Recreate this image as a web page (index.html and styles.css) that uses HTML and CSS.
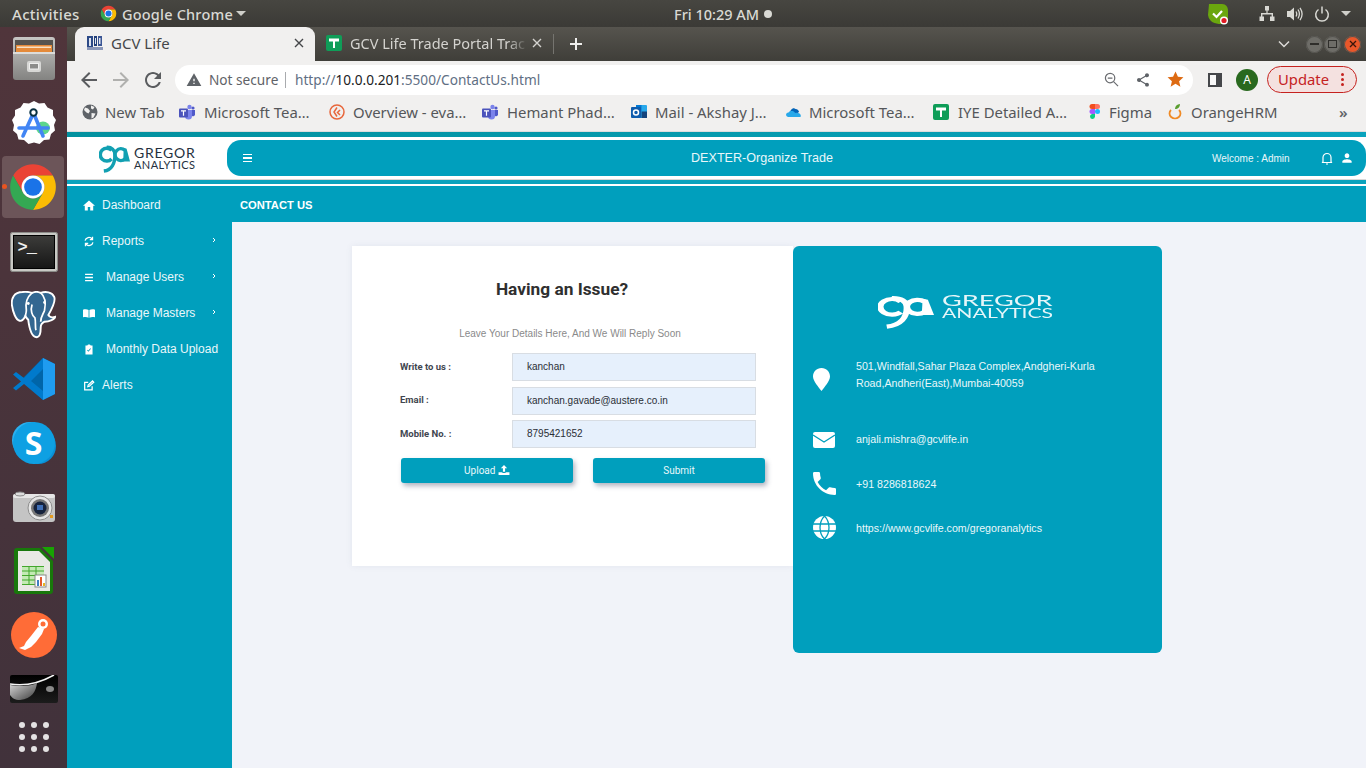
FILE: index.html
```html
<!DOCTYPE html>
<html lang="en">
<head>
<meta charset="utf-8">
<title>GCV Life</title>
<link rel="stylesheet" href="styles.css">
</head>
<body>
<svg class="defs" width="0" height="0" aria-hidden="true">
  <symbol id="chrome" viewBox="0 0 48 48">
    <path fill="#ea4335" d="M5 13A22 22 0 0 1 43 13H24A11 11 0 0 0 14.500 18.500L14.500 29.500Z"/>
    <path fill="#fbbc04" d="M24 13H43A22 22 0 0 1 24 46L33.500 29.500A11 11 0 0 0 24 13Z"/>
    <path fill="#34a853" d="M5 13L14.500 29.500A11 11 0 0 0 33.500 29.500L24 46A22 22 0 0 1 5 13Z"/>
    <circle cx="24" cy="24" r="11" fill="#fff"/>
    <circle cx="24" cy="24" r="8.500" fill="#1a73e8"/>
  </symbol>
  <symbol id="sheet" viewBox="0 0 16 16">
    <rect width="16" height="16" rx="2" fill="#0f9d58"/>
    <path fill="#fff" d="M3 3.500H13V6.500H9V13H7V6.500H3Z"/>
  </symbol>
  <symbol id="teams" viewBox="0 0 16 16">
    <circle cx="10.500" cy="3" r="2.200" fill="#7b83eb"/>
    <circle cx="14" cy="4" r="1.600" fill="#5059c9"/>
    <path fill="#7b83eb" d="M6 6H13V12A3.500 3.500 0 0 1 6 12Z"/>
    <path fill="#5059c9" d="M13 6H16V10.500A2 2 0 0 1 13 12Z"/>
    <rect x="0" y="4.500" width="9" height="9" rx="1" fill="#4b53bc"/>
    <path fill="#fff" d="M2 6.300H7V7.500H5.100V11.800H3.900V7.500H2Z"/>
  </symbol>
  <symbol id="mark" viewBox="0 0 32 30" preserveAspectRatio="none">
    <g fill="none" stroke="currentColor" stroke-width="3.600">
      <path d="M13 6.500A6.700 6.700 0 1 0 13 15.500"/>
      <path d="M8 3.500C13 3.200 16.500 6.500 16.500 11C16.500 20 13 27 5 28"/>
      <path d="M26.500 6.500A6 6 0 1 0 26.500 15.500"/>
    </g>
    <path fill="currentColor" d="M25.500 4L28.500 5L32 18H25Z"/>
  </symbol>
</svg>

<header class="topbar">
  <span class="top-activities">Activities</span>
  <svg class="top-chrome"><use href="#chrome"/></svg>
  <span class="top-app">Google Chrome</span>
  <span class="caret top-caret"></span>
  <span class="top-clock">Fri 10:29 AM</span>
  <span class="top-dot"></span>
  <div class="tray">
    <svg class="tray-shield" viewBox="0 0 22 22">
      <path fill="#6aa60e" d="M2 1H15C19 1 21 4 21 8V15C21 19 18 21 14 21C8 21 2 19 1 12Z"/>
      <path fill="none" stroke="#fff" stroke-width="2.200" d="M6 10.500L9.500 14L15 8"/>
      <circle cx="17" cy="17.500" r="4" fill="#fff"/>
      <circle cx="17" cy="17.500" r="2.600" fill="#e01b24"/>
    </svg>
    <svg class="tray-net" viewBox="0 0 16 16">
      <path fill="#d8d8d3" d="M6 0H10V4.500H8.600V7H14V10.500H15.500V15H11V10.500H12.600V8.400H3.400V10.500H5V15H.5V10.500H2V7H7.400V4.500H6Z"/>
    </svg>
    <svg class="tray-vol" viewBox="0 0 16 16">
      <path fill="#d8d8d3" d="M0 5H3L7 1.500V14.500L3 11H0Z"/>
      <path fill="none" stroke="#d8d8d3" stroke-width="1.300" d="M9 5.500Q10.500 8 9 10.500M11 3.500Q13.800 8 11 12.500M13 1.800Q17.200 8 13 14.200"/>
    </svg>
    <svg class="tray-power" viewBox="0 0 16 16">
      <path fill="none" stroke="#d8d8d3" stroke-width="1.500" d="M4.500 3.500A6.300 6.300 0 1 0 11.500 3.500M8 .5V7.500"/>
    </svg>
    <span class="caret"></span>
  </div>
</header>

<div class="desktop">
  <nav class="dock">
    <div class="dock-slot">
      <svg class="dock-icon" viewBox="0 0 44 44">
        <defs>
          <linearGradient id="cab" x1="0" y1="0" x2="0" y2="1">
            <stop offset="0" stop-color="#c6c6c4"/>
            <stop offset="1" stop-color="#838381"/>
          </linearGradient>
        </defs>
        <rect x="1" y="0" width="42" height="43" rx="3" fill="url(#cab)"/>
        <rect x="3" y="3" width="38" height="12" fill="#55534f"/>
        <rect x="4" y="8" width="36" height="7" fill="#e48a3a"/>
        <rect x="5" y="9.500" width="34" height="1.500" fill="#f6e0c4"/>
        <rect x="1" y="15" width="42" height="2" fill="#dcdcda"/>
        <rect x="15" y="24" width="14" height="11" rx="2" fill="#d7d7d5"/>
        <rect x="17.500" y="26.500" width="9" height="5.500" fill="#8c8c8a" stroke="#efefee"/>
      </svg>
    </div>
    <div class="dock-slot">
      <svg class="dock-icon" viewBox="0 0 44 44">
        <path fill="#fff" d="M22 0L27 2.500L32.500 2L35.500 6.500L41 9L41 14.500L44 19L42 24L43 29.500L39 33L37.500 38.500L32 39L27.500 43L22 41.500L16.500 43L12 39L6.500 38.500L5 33L1 29.500L2 24L0 19L3 14.500L3 9L8.500 6.500L11.500 2L17 2.500Z"/>
        <ellipse cx="31" cy="27" rx="7" ry="6.500" fill="#5cd68d"/>
        <path fill="none" stroke="#4285f4" stroke-width="3.600" stroke-linecap="round" d="M21 13L11 35M22 13L31 35M7 27H36"/>
        <circle cx="21.500" cy="11.500" r="3.200" fill="#fff" stroke="#073042" stroke-width="2"/>
      </svg>
    </div>
    <div class="dock-slot">
      <div class="dock-tile">
        <span class="dock-running"></span>
        <svg class="dock-chrome"><use href="#chrome"/></svg>
      </div>
    </div>
    <div class="dock-slot">
      <div class="term">
        <div class="term-screen">&gt;_</div>
      </div>
    </div>
    <div class="dock-slot">
      <svg class="dock-icon dock-pg" viewBox="0 0 48 50">
        <path fill="#336791" stroke="#fff" stroke-width="2" d="M12 1C3 1 0 8 1 15C2 22 5 30 9 31C12 32 14 28 15 26C16 28 17 29 18 30C19 38 21 47 26 48C30 49 31 44 31 38C31 35 33 33 35 32C40 32 46 29 46 27C43 28 40 27 39 25C43 18 47 10 45 6C43 1 36 0 31 2C28 .5 25 .5 22 2C19 1 15 .5 12 1Z"/>
        <path fill="none" stroke="#fff" stroke-width="1.800" d="M22 2C16 7 15 14 16 20C16 23 15 25 15 26M31 2C37 7 36 15 35 20C34 24 31 26 31 32M22 14C20 20 22 26 25 28C26 32 25 38 26 41"/>
        <circle cx="18" cy="13" r="1.500" fill="#fff"/>
        <circle cx="35" cy="12" r="1.500" fill="#fff"/>
      </svg>
    </div>
    <div class="dock-slot">
      <svg class="dock-icon" viewBox="0 0 44 44">
        <path fill="#0065a9" d="M31 1L43 7V37L31 43L9 23Z"/>
        <path fill="#007acc" d="M12 21L4 15L1 17.500L9 24.500L1 31L4 33.500L12 27L31 43V34L19 24L31 12V1Z"/>
        <path fill="#1f9cf0" d="M31 1L43 7V37L31 43Z"/>
      </svg>
    </div>
    <div class="dock-slot">
      <div class="skype"><span class="skype-s">S</span></div>
    </div>
    <div class="dock-slot">
      <svg class="dock-icon dock-cam" viewBox="0 0 44 32">
        <rect x="1" y="3" width="42" height="28" rx="3" fill="#c4c4c4"/>
        <rect x="1" y="3" width="42" height="4" rx="2" fill="#e6e6e6"/>
        <ellipse cx="8" cy="3" rx="5" ry="2" fill="#dcdcdc" stroke="#8a8a8a"/>
        <circle cx="28" cy="17" r="12" fill="#e5e5e5" stroke="#8e8e8e"/>
        <circle cx="28" cy="17" r="9" fill="#777"/>
        <circle cx="28" cy="17" r="6.500" fill="#16233d"/>
        <rect x="25" y="14" width="6" height="5" fill="#3f6fb6"/>
        <rect x="38" y="24" width="3" height="3" fill="#e49a21"/>
      </svg>
    </div>
    <div class="dock-slot">
      <svg class="dock-icon dock-calc" viewBox="0 0 40 48">
        <path fill="#18a303" d="M28 0H40V12Z"/>
        <path fill="#18780b" d="M3 1H26L39 14V44A3 3 0 0 1 36 47H3A3 3 0 0 1 0 44V4A3 3 0 0 1 3 1Z"/>
        <path fill="#e8e8e4" d="M4 4H25L36 15V44H4Z"/>
        <rect x="8" y="19" width="22" height="19" fill="#c3eab4"/>
        <path stroke="#43a72c" fill="none" d="M8 19.500H30M8 24H30M8 28.500H30M8 33H30M8 37.500H30M15 19V38M22 19V38"/>
        <rect x="21" y="28" width="11" height="12" fill="#fff" stroke="#888"/>
        <rect x="23" y="33" width="2" height="6" fill="#3e7fc1"/>
        <rect x="26" y="30" width="2" height="9" fill="#e2582a"/>
        <rect x="29" y="36" width="2" height="3" fill="#e8b321"/>
      </svg>
    </div>
    <div class="dock-slot">
      <svg class="dock-icon dock-postman" viewBox="0 0 46 46">
        <circle cx="23" cy="23" r="23" fill="#ff6c37"/>
        <path fill="#fff" d="M8 36L13 34L15 30L20 24L27 15L33 17L31 22L25 30L20 35L14 38Z"/>
        <circle cx="32" cy="12" r="5" fill="#fff"/>
        <circle cx="32" cy="12" r="2.500" fill="#ff6c37"/>
      </svg>
    </div>
    <div class="dock-slot dock-slot-pan">
      <svg class="dock-icon dock-pan" viewBox="0 0 48 28">
        <defs>
          <linearGradient id="pan" x1="0" y1="0" x2="0" y2="1">
            <stop offset="0" stop-color="#000"/>
            <stop offset="1" stop-color="#1c1c1c"/>
          </linearGradient>
          <linearGradient id="panbowl" x1="0" y1="0" x2="1" y2="1">
            <stop offset="0" stop-color="#d8d8d8"/>
            <stop offset="1" stop-color="#3a3a3a"/>
          </linearGradient>
        </defs>
        <rect width="48" height="28" rx="2" fill="url(#pan)"/>
        <path fill="url(#panbowl)" d="M0 10C10 12 22 11 27 8C26 16 22 24 10 25C5 25 2 23 0 20Z"/>
        <path fill="none" stroke="#f4f4f4" stroke-width="1.600" d="M0 9C12 11 28 9 44 0"/>
        <ellipse cx="40" cy="14" rx="4" ry="3" fill="#8a8a8a"/>
      </svg>
    </div>
    <div class="dock-grid">
      <span class="dock-dotrow"><i></i><i></i><i></i></span>
      <span class="dock-dotrow"><i></i><i></i><i></i></span>
      <span class="dock-dotrow"><i></i><i></i><i></i></span>
    </div>
  </nav>

  <div class="window">
    <div class="tabstrip">
      <div class="tab tab-active">
        <svg class="fav" viewBox="0 0 16 16">
          <rect x="0" y="1" width="6" height="13" fill="#2c4a87"/>
          <rect x="7" y="1" width="3" height="10" fill="#223f78"/>
          <rect x="11" y="1" width="4" height="10" fill="#3a5594"/>
          <rect x="0" y="12" width="16" height="3" fill="#8a97b8"/>
          <rect x="2" y="3" width="2" height="8" fill="#dfe5f0"/>
          <rect x="8" y="3" width="1" height="6" fill="#dfe5f0"/>
          <rect x="12" y="3" width="1.500" height="6" fill="#dfe5f0"/>
        </svg>
        <span class="tab-title">GCV Life</span>
        <svg class="tab-x" viewBox="0 0 10 10"><path d="M1 1L9 9M9 1L1 9"/></svg>
      </div>
      <div class="tab tab-other">
        <svg class="fav"><use href="#sheet"/></svg>
        <span class="tab-title tab-fade">GCV Life Trade Portal Trac</span>
        <svg class="tab-x" viewBox="0 0 10 10"><path d="M1 1L9 9M9 1L1 9"/></svg>
      </div>
      <span class="tab-sep"></span>
      <svg class="tab-plus" viewBox="0 0 14 14"><path d="M7 1V13M1 7H13"/></svg>
      <svg class="tab-search" viewBox="0 0 12 8"><path d="M1 1.500L6 6.500L11 1.500"/></svg>
      <div class="winbtns">
        <span class="winbtn"><i class="win-min"></i></span>
        <span class="winbtn"><i class="win-max"></i></span>
        <span class="winbtn win-close">
          <svg viewBox="0 0 8 8"><path d="M1 1L7 7M7 1L1 7"/></svg>
        </span>
      </div>
    </div>

    <div class="toolbar">
      <svg class="nav-ico" viewBox="0 0 24 24"><path d="M20 11H7.830l5.590-5.590L12 4l-8 8 8 8 1.410-1.410L7.830 13H20v-2z"/></svg>
      <svg class="nav-ico nav-dim" viewBox="0 0 24 24"><path d="M12 4l-1.410 1.410L16.170 11H4v2h12.170l-5.580 5.590L12 20l8-8z"/></svg>
      <svg class="nav-ico" viewBox="0 0 24 24"><path d="M17.650 6.350C16.200 4.900 14.210 4 12 4c-4.420 0-7.990 3.580-7.990 8s3.570 8 7.990 8c3.730 0 6.840-2.550 7.730-6h-2.080c-.82 2.330-3.040 4-5.650 4-3.310 0-6-2.690-6-6s2.690-6 6-6c1.660 0 3.140.69 4.220 1.780L13 11h7V4l-2.350 2.350z"/></svg>
      <div class="omnibox">
        <svg class="omni-warn" viewBox="0 0 24 24"><path d="M1 21h22L12 2 1 21zm12-3h-2v-2h2v2zm0-4h-2v-4h2v4z"/></svg>
        <span class="omni-ns">Not secure</span>
        <span class="omni-sep"></span>
        <span class="omni-url">http://<b>10.0.0.201</b>:5500/ContactUs.html</span>
        <svg class="omni-ico" viewBox="0 0 16 16"><circle cx="6.500" cy="6.500" r="5"/><path d="M10.200 10.200L15 15M4 6.500H9"/></svg>
        <svg class="omni-share" viewBox="0 0 24 24"><path d="M18 16.080c-.76 0-1.440.3-1.960.77L8.910 12.700c.05-.23.09-.46.09-.7s-.04-.47-.09-.7l7.050-4.110c.54.5 1.250.81 2.040.81 1.660 0 3-1.340 3-3s-1.340-3-3-3-3 1.340-3 3c0 .24.04.47.09.7L8.040 9.810C7.500 9.310 6.790 9 6 9c-1.660 0-3 1.340-3 3s1.340 3 3 3c.79 0 1.500-.31 2.040-.81l7.120 4.160c-.05.21-.08.43-.08.65 0 1.610 1.310 2.920 2.920 2.920 1.610 0 2.920-1.310 2.920-2.920s-1.310-2.920-2.920-2.920z"/></svg>
        <svg class="omni-star" viewBox="0 0 24 24"><path d="M12 17.270L18.180 21l-1.640-6.730L22 9.240l-6.910-.59L12 2 8.910 8.650 2 9.240l5.460 5.030L5.820 21z"/></svg>
      </div>
      <span class="panel-ico"></span>
      <span class="avatar">A</span>
      <div class="update"><span>Update</span><span class="update-dots"><i></i><i></i><i></i></span></div>
    </div>

    <div class="bookmarks">
      <div class="bm">
        <svg class="bm-ico" viewBox="0 0 16 16"><circle cx="8" cy="8" r="7.500" fill="#5f6368"/><path fill="#f1f0ef" d="M3 3.500L6 4.500L8 7L6.500 9.500L4.500 8.500L2 6ZM9 1.500L12.500 3L11 5.500L9 4.500ZM9.500 9L13.500 9.500L11.500 13.500L9.500 14.500Z"/></svg>
        <span class="bm-text">New Tab</span>
      </div>
      <div class="bm">
        <svg class="bm-ico"><use href="#teams"/></svg>
        <span class="bm-text">Microsoft Tea…</span>
      </div>
      <div class="bm">
        <svg class="bm-ico" viewBox="0 0 16 16"><circle cx="8" cy="8" r="7" fill="none" stroke="#e8673c" stroke-width="1.500"/><path fill="none" stroke="#e8673c" stroke-width="1.500" d="M8 3.500L5 8L8 12.500M11 6L8.500 8.500L11 11"/></svg>
        <span class="bm-text">Overview - eva…</span>
      </div>
      <div class="bm">
        <svg class="bm-ico"><use href="#teams"/></svg>
        <span class="bm-text">Hemant Phad…</span>
      </div>
      <div class="bm">
        <svg class="bm-ico" viewBox="0 0 16 16"><rect x="5" y="1" width="11" height="13" rx="1" fill="#28a8ea"/><rect x="5" y="1" width="5.500" height="6.500" fill="#0078d4"/><rect x="10.500" y="7.500" width="5.500" height="6.500" fill="#14447d"/><rect x="0" y="3" width="10" height="11" rx="1" fill="#0f5cad"/><circle cx="5" cy="8.500" r="2.500" fill="none" stroke="#fff" stroke-width="1.500"/></svg>
        <span class="bm-text">Mail - Akshay J…</span>
      </div>
      <div class="bm">
        <svg class="bm-ico" viewBox="0 0 16 16"><path fill="#0364b8" d="M4 11C5 6 8 3 10.500 5C12.500 5 14 6.500 14 8L7 13H3Z"/><path fill="#28a8ea" d="M3.500 13C.5 13 0 9 3.500 8.500C5 6.500 9 6.500 10 9C13 8 17 10 15.500 13Z"/></svg>
        <span class="bm-text">Microsoft Tea…</span>
      </div>
      <div class="bm">
        <svg class="bm-ico"><use href="#sheet"/></svg>
        <span class="bm-text">IYE Detailed A…</span>
      </div>
      <div class="bm">
        <svg class="bm-ico" viewBox="0 0 16 16"><path fill="#f24e1e" d="M5 0H8V5H5A2.500 2.500 0 0 1 5 0Z"/><path fill="#ff7262" d="M8 0H10.500A2.500 2.500 0 0 1 10.500 5H8Z"/><path fill="#a259ff" d="M5 5H8V10H5A2.500 2.500 0 0 1 5 5Z"/><circle cx="10.500" cy="7.500" r="2.500" fill="#1abcfe"/><path fill="#0acf83" d="M5 10H8V12.500A2.500 2.500 0 1 1 5 10Z"/></svg>
        <span class="bm-text">Figma</span>
      </div>
      <div class="bm">
        <svg class="bm-ico" viewBox="0 0 16 16"><path fill="none" stroke="#f08a24" stroke-width="1.800" d="M4 6A5.500 5 0 1 0 12 6"/><path fill="#5a9e2f" d="M8 5C8 2 10 .5 13 0C13 3 11 5 8 5Z"/></svg>
        <span class="bm-text">OrangeHRM</span>
      </div>
      <span class="bm-more">»</span>
    </div>

    <div class="page">
      <div class="page-strip"></div>
      <header class="app-head">
        <div class="brand">
          <svg class="brand-mark"><use href="#mark"/></svg>
          <div class="brand-words">
            <span class="brand-a">GREGOR</span>
            <span class="brand-b">ANALYTICS</span>
          </div>
        </div>
        <div class="app-pill">
          <div class="burger"><i></i><i></i><i></i></div>
          <span class="app-title">DEXTER-Organize Trade</span>
          <span class="app-welcome">Welcome : Admin</span>
          <svg class="app-bell" viewBox="0 0 12 13"><path d="M2 10V5.500A4 4 0 0 1 10 5.500V10L11 10.500H1Z"/><path d="M5 12H7"/></svg>
          <svg class="app-user" viewBox="0 0 24 24"><path d="M12 12c2.210 0 4-1.790 4-4s-1.790-4-4-4-4 1.790-4 4 1.790 4 4 4zm0 2c-2.670 0-8 1.340-8 4v2h16v-2c0-2.660-5.330-4-8-4z"/></svg>
        </div>
      </header>
      <div class="app-strip"></div>
      <div class="app-body">
        <aside class="side">
          <a class="side-item">
            <svg class="side-ico" viewBox="2 3 20 17"><path d="M10 20v-6h4v6h5v-8h3L12 3 2 12h3v8z"/></svg>
            <span>Dashboard</span>
          </a>
          <a class="side-item">
            <svg class="side-ico side-line" viewBox="0 0 14 14"><path d="M2 6A5 5 0 0 1 11 4M12 8A5 5 0 0 1 3 10M11.500 1V4.500H8M2.500 13V9.500H6"/></svg>
            <span>Reports</span>
            <svg class="side-chev" viewBox="0 0 4 6"><path d="M1 1L3 3L1 5"/></svg>
          </a>
          <a class="side-item side-wide">
            <svg class="side-ico side-line" viewBox="0 0 14 14"><path d="M2 3H12M2 7H12M2 11H12"/></svg>
            <span>Manage Users</span>
            <svg class="side-chev" viewBox="0 0 4 6"><path d="M1 1L3 3L1 5"/></svg>
          </a>
          <a class="side-item side-wide">
            <svg class="side-ico" viewBox="0 1.500 14 11"><path d="M0 2.500C2 1.800 5 1.800 6.500 3V12C5 11 2 11 0 11.500ZM14 2.500C12 1.800 9 1.800 7.500 3V12C9 11 12 11 14 11.500Z"/></svg>
            <span>Manage Masters</span>
            <svg class="side-chev" viewBox="0 0 4 6"><path d="M1 1L3 3L1 5"/></svg>
          </a>
          <a class="side-item side-wide">
            <svg class="side-ico" viewBox="0 0 14 14"><path fill-rule="evenodd" d="M2.500 2H5C5 .2 9 .2 9 2H11.500V13.500H2.500ZM4.500 8L6.200 10L9.500 6L8.700 5.300L6.200 8.300L5.200 7.200Z"/></svg>
            <span>Monthly Data Upload</span>
          </a>
          <a class="side-item">
            <svg class="side-ico side-line" viewBox="0 0 14 14"><path d="M11 8V12.500H1.500V3H6M5.500 8.500L6 6.500L11.500 1.200L13 2.700L7.500 8Z"/></svg>
            <span>Alerts</span>
          </a>
        </aside>
        <main class="content">
          <div class="crumb">CONTACT US</div>
          <div class="contact">
            <section class="form-card">
              <h1 class="form-title">Having an Issue?</h1>
              <p class="form-sub">Leave Your Details Here, And We Will Reply Soon</p>
              <div class="form-row">
                <span class="form-label">Write to us :</span>
                <div class="field">kanchan</div>
              </div>
              <div class="form-row">
                <span class="form-label">Email :</span>
                <div class="field">kanchan.gavade@austere.co.in</div>
              </div>
              <div class="form-row">
                <span class="form-label">Mobile No. :</span>
                <div class="field">8795421652</div>
              </div>
              <div class="form-btns">
                <button class="btn" type="button">Upload
                  <svg class="btn-ico" viewBox="0 0 12 11"><path d="M6 0L9.500 3.500H7.200V7.500H4.800V3.500H2.500ZM0 8H3.500C4 9 8 9 8.500 8H12V11H0Z"/></svg>
                </button>
                <button class="btn" type="button">Submit</button>
              </div>
            </section>
            <section class="info-card">
              <div class="info-logo">
                <svg class="info-mark"><use href="#mark"/></svg>
                <div class="info-words">
                  <span class="info-a">GREGOR</span>
                  <span class="info-b">ANALYTICS</span>
                </div>
              </div>
              <div class="info-row info-addr">
                <svg class="info-ico ico-pin" viewBox="0 0 17 23"><path d="M8.500 0C3.500 0 0 3.800 0 8.500C0 13 5.500 19 8.500 23C11.500 19 17 13 17 8.500C17 3.800 13.500 0 8.500 0Z"/></svg>
                <p>501,Windfall,Sahar Plaza Complex,Andgheri-Kurla<br>Road,Andheri(East),Mumbai-40059</p>
              </div>
              <div class="info-row">
                <svg class="info-ico ico-mail" viewBox="0 0 22 16"><rect width="22" height="16" rx="2"/><path class="mail-v" d="M0 3L11 10L22 3"/></svg>
                <p>anjali.mishra@gcvlife.in</p>
              </div>
              <div class="info-row">
                <svg class="info-ico ico-up" viewBox="3 3 18 18"><path d="M6.620 10.790c1.440 2.830 3.760 5.140 6.590 6.590l2.200-2.200c.27-.27.67-.36 1.020-.24 1.120.37 2.330.57 3.570.57.55 0 1 .45 1 1V20c0 .55-.45 1-1 1-9.390 0-17-7.610-17-17 0-.55.45-1 1-1h3.500c.55 0 1 .45 1 1 0 1.250.2 2.450.57 3.570.11.35.03.74-.25 1.020l-2.200 2.200z"/></svg>
                <p>+91 8286818624</p>
              </div>
              <div class="info-row info-web">
                <svg class="info-ico ico-up" viewBox="0 0 23 23"><circle cx="11.500" cy="11.500" r="11.500"/><path class="globe-l" d="M0 8H23M0 15H23M11.500 0C5.500 6 5.500 17 11.500 23C17.500 17 17.500 6 11.500 0Z"/></svg>
                <p>https://www.gcvlife.com/gregoranalytics</p>
              </div>
            </section>
          </div>
        </main>
      </div>
    </div>
  </div>
</div>
</body>
</html>
```

FILE: styles.css
```css
* { box-sizing: border-box; }
html, body { margin: 0; height: 100%; }
body {
  width: 1366px;
  height: 768px;
  overflow: hidden;
  display: flex;
  flex-direction: column;
  font-family: "Liberation Sans", Arial, sans-serif;
  background: #f1f3f9;
}
.defs { position: absolute; }
p, h1 { margin: 0; }
i { display: block; }

/* GNOME top bar */
.topbar {
  flex: 0 0 27px;
  display: flex;
  align-items: center;
  background: linear-gradient(#474641, #3b3a36);
  color: #d9d9d4;
  font-family: "Noto Sans", sans-serif;
  font-size: 14.500px;
  font-weight: 500;
}
.top-activities { margin-left: 12px; width: 88px; font-size: 15px; letter-spacing: .3px; white-space: nowrap; }
.top-chrome { width: 17px; height: 17px; }
.top-app { margin-left: 5px; width: 112px; letter-spacing: .2px; white-space: nowrap; }
.caret {
  width: 0; height: 0;
  border-left: 5px solid transparent;
  border-right: 5px solid transparent;
  border-top: 5px solid #cfcfca;
}
.top-caret { margin-left: 2px; }
.top-clock { margin-left: 428px; width: 90px; white-space: nowrap; }
.top-dot { width: 8px; height: 8px; border-radius: 50%; background: #d9d9d4; }
.tray { margin-left: auto; display: flex; align-items: center; padding-right: 15px; }
.tray-shield { width: 22px; height: 22px; margin-right: 30px; }
.tray-net { width: 16px; height: 16px; margin-right: 12px; }
.tray-vol { width: 16px; height: 16px; margin-right: 11px; }
.tray-power { width: 16px; height: 16px; margin-right: 11px; }

/* main */
.desktop { flex: 1; display: flex; min-height: 0; }

/* dock */
.dock {
  flex: 0 0 67px;
  display: flex;
  flex-direction: column;
  align-items: center;
  background: linear-gradient(#50353b, #41323b);
}
.dock-slot {
  flex: 0 0 64px;
  width: 100%;
  display: flex;
  align-items: center;
  justify-content: center;
}
.dock-icon { width: 44px; height: 44px; }
.dock-tile {
  position: relative;
  width: 62px;
  height: 62px;
  margin-right: 1px;
  border-radius: 4px;
  background: #6c5559;
  display: flex;
  align-items: center;
  justify-content: center;
}
.dock-chrome { width: 50px; height: 50px; }
.dock-running {
  position: absolute;
  left: 0;
  top: 28px;
  width: 5px;
  height: 5px;
  border-radius: 50%;
  background: #e95420;
}
.term {
  width: 46px;
  height: 38px;
  margin-top: 1px;
  border: 2px solid #c8c8c4;
  outline: 1px solid #8b8b88;
  background: #000;
  padding: 1px;
  border-radius: 1px;
}
.term-screen {
  height: 100%;
  background: linear-gradient(#3c3c3a, #161616);
  color: #eee;
  font-family: "Liberation Mono", monospace;
  font-weight: 700;
  font-size: 17px;
  letter-spacing: -1px;
  line-height: 24px;
  padding-left: 4px;
  outline: 1px solid #000;
}
.dock-pg { width: 46px; height: 48px; }
.dock-cam { height: 32px; }
.dock-calc { width: 40px; height: 48px; }
.dock-postman { width: 46px; height: 46px; }
.skype {
  width: 42px;
  height: 42px;
  border-radius: 50%;
  background: #0ea0e3;
  display: flex;
  align-items: center;
  justify-content: center;
  box-shadow: -4px -3px 0 -3px #2bb0ef, 4px 3px 0 -3px #0a8fd6;
}
.skype-s {
  color: #fff;
  font-family: "Open Sans", sans-serif;
  font-weight: 700;
  font-size: 32px;
  line-height: 42px;
}
.dock-slot-pan { flex-basis: 50px; padding-bottom: 6px; }
.dock-pan { width: 48px; height: 28px; }
.dock-grid {
  display: flex;
  flex-direction: column;
  gap: 6px;
  margin-top: 5px;
}
.dock-dotrow { display: flex; gap: 6px; }
.dock-dotrow i { width: 6px; height: 6px; border-radius: 50%; background: #e4e2e3; }

/* chrome window */
.window {
  flex: 1;
  min-width: 0;
  display: flex;
  flex-direction: column;
  font-family: "Noto Sans", sans-serif;
}
.tabstrip {
  flex: 0 0 34px;
  display: flex;
  align-items: center;
  background: linear-gradient(#56544e, #3f3e39);
  padding-left: 8px;
}
.tab {
  height: 34px;
  width: 240px;
  flex: none;
  display: flex;
  align-items: center;
  padding-left: 12px;
  padding-bottom: 3px;
  font-size: 15px;
  white-space: nowrap;
}
.tab-active {
  background: #f1f0ef;
  border-radius: 9px 9px 0 0;
  color: #45474a;
}
.tab-other { color: #d4d3cf; padding-left: 11px; width: 238px; font-size: 14.500px; }
.fav { width: 16px; height: 16px; flex: none; }
.tab-title { margin-left: 8px; overflow: hidden; flex: 1; min-width: 0; }
.tab-fade {
  -webkit-mask-image: linear-gradient(90deg, #000 88%, transparent);
  mask-image: linear-gradient(90deg, #000 88%, transparent);
}
.tab-x { width: 10px; height: 10px; flex: none; margin: 0 11px 0 12px; fill: none; stroke: currentColor; stroke-width: 1.400; }
.tab-other .tab-x { margin-left: 4px; }
.tab-sep { width: 1px; height: 20px; background: #75746f; flex: none; }
.tab-plus { width: 14px; height: 14px; margin-left: 15px; fill: none; stroke: #eeeeec; stroke-width: 2; flex: none; }
.tab-search { width: 12px; height: 8px; margin-left: 695px; fill: none; stroke: #dddcd8; stroke-width: 1.500; flex: none; }
.winbtns { display: flex; margin-left: 16px; gap: 1px; }
.winbtn {
  width: 17px;
  height: 17px;
  border-radius: 50%;
  background: #6e6d68;
  display: flex;
  align-items: center;
  justify-content: center;
  box-shadow: inset 0 0 0 1px #55544f;
}
.win-min { width: 9px; height: 1.500px; background: #2f2e2b; }
.win-max { width: 9px; height: 8px; border: 1.500px solid #2f2e2b; }
.win-close { background: #e9572a; margin-left: 2px; }
.win-close svg { width: 8px; height: 8px; fill: none; stroke: #38150a; stroke-width: 1.300; }

.toolbar {
  flex: 0 0 37px;
  display: flex;
  align-items: center;
  background: #f1f0ef;
  padding-left: 10px;
}
.nav-ico { width: 24px; height: 24px; fill: #5a5c5f; margin-right: 8px; flex: none; }
.nav-dim { fill: #b0b0ae; }
.omnibox {
  width: 1018px;
  height: 30px;
  margin-left: 2px;
  margin-right: 14px;
  background: #fff;
  border-radius: 15px;
  display: flex;
  align-items: center;
  padding-left: 11px;
  flex: none;
  font-size: 13.650px;
  white-space: nowrap;
}
.omni-warn { width: 16px; height: 16px; fill: #5f6368; flex: none; }
.omni-ns { color: #5f6368; margin-left: 7px; width: 69px; }
.omni-sep { width: 1px; height: 16px; background: #a9abae; margin-left: 7px; }
.omni-url { margin-left: 9px; color: #5f6f84; width: 809px; }
.omni-url b { font-weight: 400; color: #202124; }
.omni-ico { width: 15px; height: 15px; fill: none; stroke: #6a6c70; stroke-width: 1.300; flex: none; }
.omni-share { width: 16px; height: 16px; fill: #5f6368; flex: none; margin-left: 16px; }
.omni-star { width: 19px; height: 19px; fill: #dd6a12; flex: none; margin-left: 15px; }
.panel-ico {
  width: 14px;
  height: 14px;
  flex: none;
  margin-left: 1px;
  border: 2px solid #45474a;
  border-right-width: 6px;
  background: #f8f8f8;
}
.avatar {
  width: 22px;
  height: 22px;
  margin-left: 14px;
  flex: none;
  border-radius: 50%;
  background: #29691f;
  color: #fff;
  font-size: 12px;
  line-height: 22px;
  text-align: center;
}
.update {
  width: 90px;
  height: 27px;
  margin-left: 9px;
  flex: none;
  border-radius: 14px;
  border: 1px solid #c5221f;
  background: #f4e1e0;
  color: #c5221f;
  font-size: 14.800px;
  display: flex;
  align-items: center;
  padding-left: 10px;
  padding-bottom: 2px;
}
.update-dots { display: flex; flex-direction: column; gap: 2px; margin-left: 12px; padding-top: 2px; }
.update-dots i { width: 3px; height: 3px; border-radius: 50%; background: #c5221f; }

.bookmarks {
  flex: 0 0 33px;
  display: flex;
  align-items: center;
  background: #f1f0ef;
  padding-left: 15px;
  padding-bottom: 6px;
  color: #55575a;
  font-size: 14.900px;
}
.bm { display: flex; align-items: center; flex: none; white-space: nowrap; width: 150px; }
.bm:nth-child(1) { width: 97px; }
.bm:nth-child(3) { width: 153px; }
.bm:nth-child(4) { width: 149px; }
.bm:nth-child(5) { width: 154px; }
.bm:nth-child(6) { width: 148px; }
.bm:nth-child(7) { width: 154px; }
.bm:nth-child(8) { width: 80px; }
.bm:nth-child(9) { width: 172px; }
.bm-ico { width: 16px; height: 16px; flex: none; margin-right: 8px; }
.bm:nth-child(1) .bm-ico { margin-right: 7px; }
.bm:nth-child(2) .bm-ico,
.bm:nth-child(4) .bm-ico,
.bm:nth-child(7) .bm-ico { margin-right: 9px; }
.bm:nth-child(8) .bm-ico { margin-right: 6px; }
.bm-more { font-size: 15px; color: #5f6368; font-weight: 600; }

/* page */
.page {
  flex: 1;
  min-height: 0;
  display: flex;
  flex-direction: column;
  background: #f1f3f9;
  font-family: "Liberation Sans", Arial, sans-serif;
}
.page-strip { flex: 0 0 6px; background: linear-gradient(90deg, #02919f, #0aa3bd); border-top: 1px solid #ddd; }
.app-head { flex: 0 0 43px; display: flex; align-items: center; background: #fff; border-bottom: 1px solid #d8d8d8; }
.brand { flex: 0 0 160px; display: flex; align-items: center; padding-left: 32px; }
.brand-mark { width: 31px; height: 29px; color: #12a0b2; flex: none; }
.brand-words { margin-left: 4px; display: flex; flex-direction: column; color: #25303e; font-family: "Lato", sans-serif; }
.brand-a { font-size: 14px; line-height: 13px; letter-spacing: .75px; }
.brand-b { font-size: 11px; line-height: 12px; letter-spacing: .4px; }
.app-pill {
  flex: 1;
  height: 36px;
  display: flex;
  align-items: center;
  background: #009fbd;
  border-radius: 14px;
  color: #e9f7fa;
}
.burger { display: flex; flex-direction: column; gap: 2px; margin-left: 16px; }
.burger i { width: 9px; height: 1.500px; background: #fff; }
.app-title { margin-left: 439px; width: 142px; font-size: 12.600px; white-space: nowrap; }
.app-welcome { margin-left: 379px; width: 78px; font-size: 10px; white-space: nowrap; }
.app-bell { width: 12px; height: 13px; margin-left: 31px; fill: none; stroke: #fff; stroke-width: 1.200; flex: none; }
.app-user { width: 14px; height: 14px; margin-left: 7px; fill: #fff; flex: none; }
.app-strip { flex: 0 0 6px; background: linear-gradient(#0aa3bd 0 4px, #fff 4px); }
.app-body { flex: 1; min-height: 0; display: flex; }

.side {
  flex: 0 0 165px;
  background: #009fbd;
  color: #eaf7fa;
  font-size: 12px;
  display: flex;
  flex-direction: column;
  padding-top: 1px;
}
.side-item { flex: 0 0 36px; display: flex; align-items: center; padding-left: 16px; white-space: nowrap; }
.side-ico { width: 12px; height: 11px; fill: #fff; flex: none; margin-right: 7px; }
.side-line { fill: none; stroke: #fff; stroke-width: 1.600; }
.side-wide span { margin-left: 4px; }
.side-chev {
  width: 4px;
  height: 6px;
  margin-left: auto;
  margin-right: 16px;
  margin-bottom: 2px;
  fill: none;
  stroke: #fff;
  stroke-width: 1;
  flex: none;
}

.content { flex: 1; min-width: 0; display: flex; flex-direction: column; }
.crumb {
  flex: 0 0 36px;
  display: flex;
  align-items: center;
  background: #009fbd;
  color: #fff;
  font-size: 11.200px;
  font-weight: 700;
  padding: 2px 0 0 8px;
}
.contact { display: flex; align-items: flex-start; padding: 24px 0 0 120px; }
.form-card {
  width: 441px;
  height: 320px;
  background: #fff;
  box-shadow: 0 0 6px rgba(120, 130, 160, .12);
  padding-top: 33px;
}
.form-title {
  width: 420px;
  text-align: center;
  font-family: "Roboto", sans-serif;
  font-size: 17.300px;
  font-weight: 700;
  line-height: 20px;
  color: #2f2f2f;
}
.form-sub {
  margin-top: 29px;
  height: 25px;
  width: 436px;
  text-align: center;
  font-size: 10px;
  line-height: 12px;
  color: #8a8a8a;
  white-space: nowrap;
}
.form-row { display: flex; align-items: center; height: 28px; margin-bottom: 5.500px; padding-left: 48px; }
.form-label {
  width: 112px;
  padding-bottom: 2px;
  font-family: "Roboto", sans-serif;
  font-size: 9.500px;
  font-weight: 700;
  color: #3f4650;
  white-space: nowrap;
}
.field {
  width: 244px;
  height: 28px;
  padding-left: 14px;
  background: #e6f0fc;
  border: 1px solid #d8dde3;
  font-size: 10px;
  line-height: 26px;
  color: #2a2f36;
}
.form-btns { display: flex; gap: 20px; padding-left: 49px; margin-top: 9.500px; }
.btn {
  width: 172px;
  height: 25px;
  padding: 0;
  border: 0;
  border-radius: 3px;
  background: #009fbd;
  color: #e9f7fa;
  font-family: "Roboto", sans-serif;
  font-size: 10px;
  box-shadow: 2px 3px 5px rgba(60, 70, 100, .4);
}
.btn-ico { width: 12px; height: 10px; fill: #fff; vertical-align: -1px; }

.info-card {
  width: 369px;
  height: 407px;
  background: #009fbd;
  border-radius: 6px;
  padding: 47px 0 0 20px;
  color: #eaf7fa;
  font-size: 10.660px;
}
.info-logo { display: flex; align-items: center; height: 37px; margin: 0 0 27px 65px; color: #fff; }
.info-mark { width: 56px; height: 35px; flex: none; }
.info-words { display: flex; flex-direction: column; margin: 0 0 10px 8px; font-family: "Lato", sans-serif; color: #e6f6f9; }
.info-a { font-size: 15.500px; line-height: 14px; transform: scaleX(1.750); transform-origin: left center; }
.info-b { font-size: 13.500px; line-height: 13px; transform: scaleX(1.570); transform-origin: left center; }
.info-row { display: flex; align-items: center; height: 45px; }
.info-row p { line-height: 17px; white-space: nowrap; }
.info-addr { height: 35px; margin-bottom: 25px; }
.info-web { margin-top: -1px; }
.info-ico { width: 23px; height: 23px; margin-right: 20px; flex: none; fill: #fff; }
.ico-pin { width: 17px; margin-right: 26px; margin-top: 10px; }
.ico-mail { width: 22px; height: 16px; margin-right: 21px; }
.ico-up { margin-bottom: 2px; }
.mail-v { fill: none; stroke: #009fbd; stroke-width: 1.300; }
.globe-l { fill: none; stroke: #009fbd; stroke-width: 1.300; }
```
